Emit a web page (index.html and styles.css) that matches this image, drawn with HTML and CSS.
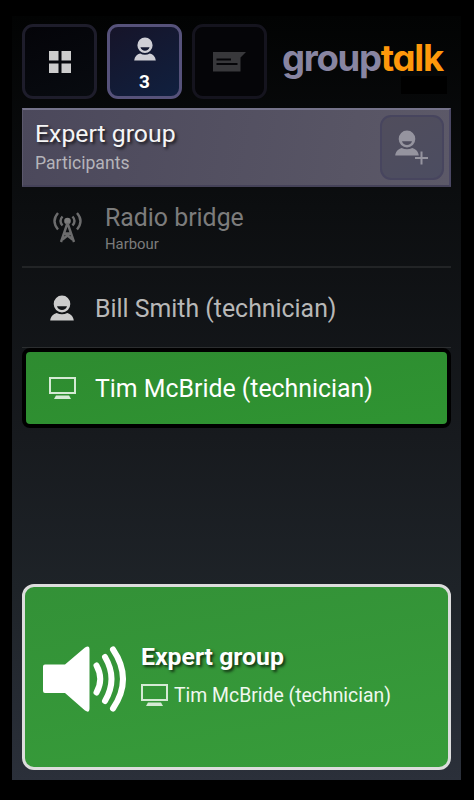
FILE: index.html
```html
<!DOCTYPE html>
<html lang="en">
<head>
  <meta charset="UTF-8" />
  <meta name="viewport" content="width=device-width, initial-scale=1" />
  <title>GroupTalk</title>
  <link rel="stylesheet" href="styles.css">
</head>
<body>
<svg class="defs" aria-hidden="true">
  <symbol id="person" viewBox="0 0 24 26">
    <path fill-rule="evenodd" d="M12 .5a8.300 8.500 0 0 1 8.300 8.500a8.300 8.500 0 0 1-16.600 0A8.300 8.500 0 0 1 12 .5zM7 11.200c.8 2.500 2.600 3.800 5 3.800s4.200-1.300 5-3.800z"/>
    <path d="M.2 25.500c.5-4 3.200-6.700 6.500-7.500c3.300 1.800 7.300 1.800 10.600 0c3.300.8 6 3.500 6.500 7.500z"/>
  </symbol>
  <symbol id="screen" viewBox="0 0 27 22">
    <path fill-rule="evenodd" d="M0 0h27v17H0zM2 2v13h23V2z"/>
    <path d="M7 18.500h13l2 3.500H5z"/>
  </symbol>
</svg>
<div class="screen">
  <header class="toolbar">
    <button class="tab" type="button" aria-label="Groups">
      <svg class="grid-icon" viewBox="0 0 22 22"><path d="M0 0h9.500v9.500H0zM12.500 0H22v9.500h-9.500zM0 12.500h9.500V22H0zM12.500 12.500H22V22h-9.500z"/></svg>
    </button>
    <button class="tab active" type="button" aria-label="Participants">
      <svg class="person-icon"><use href="#person"/></svg>
      <span class="count">3</span>
    </button>
    <button class="tab disabled" type="button" aria-label="Messages">
      <svg class="message-icon" viewBox="0 0 33 20"><path fill-rule="evenodd" d="M0 0h33l-5.500 5.500V19.500H0zM3.500 6.500v2h14.500v-2zM3.500 11v2h21v-2z"/></svg>
    </button>
    <div class="logo"><span class="group">group</span><span class="talk">talk</span></div>
  </header>
  <main>
    <section class="group-bar">
      <div>
        <h1>Expert group</h1>
        <p>Participants</p>
      </div>
      <button class="add" type="button" aria-label="Add participant">
        <svg viewBox="0 0 33 35">
          <use href="#person" width="24" height="26"/>
          <path d="M25.500 21.500h2v5.500h5.500v2h-5.500v5.500h-2V29H20v-2h5.500z"/>
        </svg>
      </button>
    </section>
    <ul class="participants">
      <li class="bridge">
        <svg class="antenna-icon" viewBox="0 0 29 31">
          <circle cx="14.500" cy="9" r="3.300" fill="currentColor" stroke="none"/>
          <path d="M14.500 11L8 30M14.500 11L21 30M11 21.500h7M9.500 27.500l7.500-6M19.500 27.500l-7.500-6"/>
          <path d="M9.500 4.500q-4 4.500 0 9M19.500 4.500q4 4.500 0 9M5 1q-7 8 0 16.500M24 1q7 8 0 16.500"/>
        </svg>
        <div>
          <span class="name">Radio bridge</span>
          <span class="place">Harbour</span>
        </div>
      </li>
      <li>
        <svg class="person-icon"><use href="#person"/></svg>
        <span class="name">Bill Smith (technician)</span>
      </li>
      <li class="talking">
        <svg class="screen-icon"><use href="#screen"/></svg>
        <span class="name">Tim McBride (technician)</span>
      </li>
    </ul>
  </main>
  <section class="speaker">
    <svg class="speaker-icon" viewBox="0 0 84 66">
      <path class="horn" d="M2 18.500h20L42 1.500q4.500-3 4.500 2v59q0 5-4.500 2L22 47H2q-2 0-2-2V20.500q0-2 2-2z"/>
      <path class="waves" d="M53.500 19.500q7.500 13.500 0 27M62 11q13 22 0 44M70 3.500q20 29.500 0 59"/>
    </svg>
    <div class="speaker-info">
      <h2>Expert group</h2>
      <p><svg class="screen-icon"><use href="#screen"/></svg><span>Tim McBride (technician)</span></p>
    </div>
  </section>
</div>
</body>
</html>
```

FILE: styles.css
```css
* {
  box-sizing: border-box;
}
body {
  margin: 0;
  background: #000;
  color: #fff;
  font-family: Roboto, "Liberation Sans", sans-serif;
}
h1, h2, p, ul {
  margin: 0;
  padding: 0;
}
button {
  padding: 0;
  font: inherit;
  color: inherit;
}
svg {
  display: block;
  flex: none;
  fill: currentColor;
}
.defs {
  position: absolute;
  width: 0;
  height: 0;
}
.screen {
  display: flex;
  flex-direction: column;
  width: 449px;
  height: 764px;
  margin: 16px 0 0 12px;
  padding: 8px 10px 10px;
  background: linear-gradient(#020303, #0c0e10 25%, #171a1e 55%, #1e2328 75%, #2b303a);
}

/* Toolbar */
.toolbar {
  display: flex;
  gap: 10px;
  height: 84px;
}
.tab {
  display: flex;
  flex-direction: column;
  align-items: center;
  justify-content: center;
  width: 75px;
  height: 75px;
  border: 3px solid #1e1d2b;
  border-radius: 11px;
  background: linear-gradient(160deg, #040409, #080b10);
  color: #ccc;
}
.tab.active {
  justify-content: flex-start;
  padding-top: 10px;
  border-color: #56527a;
  background: linear-gradient(150deg, #161429, #10203f);
  color: #cfcfd6;
}
.tab.disabled {
  border-color: #15141e;
  background: #050508;
  color: #38383b;
}
.grid-icon {
  width: 22px;
  height: 22px;
}
.tab .person-icon {
  width: 22px;
  height: 24px;
}
.message-icon {
  width: 33px;
  height: 20px;
}
.count {
  margin-top: 10px;
  color: #fff;
  font-size: 19px;
  font-weight: 700;
  line-height: 21px;
}
.logo {
  position: relative;
  display: flex;
  margin: 11px 0 0 5px;
  font-family: Inter, sans-serif;
  font-size: 36.500px;
  font-weight: 700;
  line-height: 46px;
  font-feature-settings: "cv11";
  white-space: nowrap;
}
.logo::after {
  content: "";
  position: absolute;
  top: 41px;
  left: 119px;
  width: 46px;
  height: 18px;
  background: #000;
}
.logo .group {
  color: #8885a2;
  letter-spacing: -1.300px;
}
.logo .talk {
  color: #ff980b;
  letter-spacing: -1.200px;
}

/* Current group */
.group-bar {
  display: flex;
  justify-content: space-between;
  height: 79px;
  padding: 5px 5px 0 12px;
  border: solid;
  border-width: 2px 2px 2px 1px;
  border-color: #75738a #4a4763 #454259 #5b586c;
  background: linear-gradient(100deg, #4b485b, #5c5968);
}
.group-bar h1 {
  margin-top: 1px;
  color: #f5f5f5;
  font-size: 24.800px;
  font-weight: 400;
  line-height: 36px;
  text-shadow: 2px 2px 3px rgba(0,0,0,0.7);
}
.group-bar p {
  margin-top: 1px;
  color: #b5b4ba;
  font-size: 17.600px;
  line-height: 21px;
}
.add {
  display: flex;
  width: 64px;
  height: 65px;
  padding: 13px 0 0 13px;
  border: 2px solid #47455e;
  border-radius: 11px;
  background: linear-gradient(150deg, #504d5c, #4c4d61);
  color: #95949f;
}
.add svg {
  width: 33px;
  height: 35px;
}

/* Participant list */
.participants {
  list-style: none;
}
.participants li {
  display: flex;
  align-items: center;
  height: 80px;
  border-bottom: 1px solid #2c2e30;
  color: #b8b8b8;
}
.participants .name {
  display: block;
  padding-top: 2px;
  font-size: 24.850px;
  line-height: 30px;
}
.participants .person-icon {
  width: 24px;
  height: 26px;
  margin: 0 21px 0 28px;
  color: #ccc;
}
.participants .bridge {
  height: 81px;
  border-bottom-width: 2px;
  border-color: #222426;
  color: #7c7c7c;
}
.bridge .place {
  display: block;
  margin: 2px 0 -1px;
  font-size: 14.850px;
  line-height: 18px;
}
.antenna-icon {
  width: 29px;
  height: 31px;
  margin: 1px 23px 0 31px;
  fill: none;
  stroke: #6c6c6d;
  stroke-width: 2.400;
}
.participants .talking {
  height: 80px;
  border: 4px solid #000;
  border-radius: 8px;
  background: linear-gradient(170deg, #2e8b30, #2f9432);
  color: #fff;
}
.screen-icon {
  width: 27px;
  height: 22px;
  color: #d5ead5;
}
.talking .screen-icon {
  margin: 0 19px 0 23px;
}

/* Active speaker */
.speaker {
  display: flex;
  align-items: center;
  height: 186px;
  margin-top: auto;
  padding-left: 18px;
  border: 3px solid #ddd;
  border-radius: 12px;
  background: linear-gradient(170deg, #339137, #379c3a);
}
.speaker-icon {
  width: 84px;
  height: 66px;
  margin-top: 4px;
}
.speaker-icon .waves {
  fill: none;
  stroke: #fff;
  stroke-width: 6;
  stroke-linecap: round;
}
.speaker-info {
  margin: 0 0 6px 14px;
}
.speaker-info h2 {
  font-size: 24.800px;
  font-weight: 700;
  line-height: 32px;
  text-shadow: 2px 2px 3px rgba(0,0,0,0.7);
}
.speaker-info p {
  display: flex;
  align-items: center;
  gap: 6px;
  margin-top: 10px;
  color: #f0f8f0;
  font-size: 19.400px;
  line-height: 24px;
}
.speaker-info span {
  padding-top: 1px;
}
```
